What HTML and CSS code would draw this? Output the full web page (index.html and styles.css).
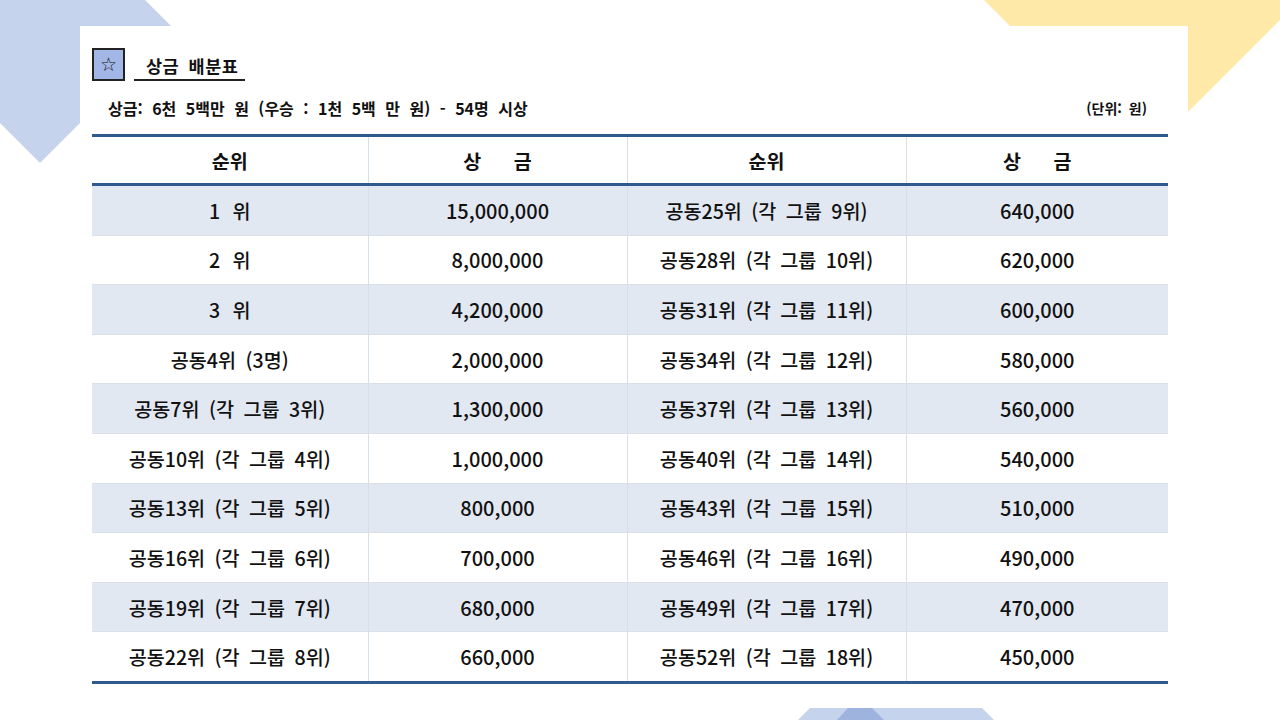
FILE: index.html
```html
<!DOCTYPE html>
<html lang="ko">
<head>
<meta charset="utf-8">
<link rel="stylesheet" href="styles.css">
</head>
<body>
<svg class="deco" width="1280" height="720" viewBox="0 0 1280 720" aria-hidden="true">
  <polygon points="40,-105 174,29 40,163 -94,29" fill="#c6d3ec"/>
  <polygon points="1142,-158 1300,0 1142,158 984,0" fill="#fee9a9"/>
  <polygon points="798,720 810,708 982,708 994,720" fill="#c6d3ec"/>
  <polygon points="837,720 848,708 872,708 884,720" fill="#9fb3df"/>
</svg>
<main class="card">
  <header class="title-row">
    <span class="star-box">☆</span>
    <h1 class="title">상금 배분표</h1>
  </header>
  <div class="sub-row">
    <span>상금: 6천 5백만 원 (우승 : 1천 5백 만 원) - 54명 시상</span>
    <span class="unit">(단위: 원)</span>
  </div>
  <table class="prize">
    <colgroup>
      <col class="c1"><col class="c2"><col class="c3"><col class="c4">
    </colgroup>
    <thead>
      <tr><th>순위</th><th class="spread">상 금</th><th>순위</th><th class="spread">상 금</th></tr>
    </thead>
    <tbody>
      <tr><td class="rank">1 위</td><td class="num">15,000,000</td><td>공동25위 (각 그룹 9위)</td><td class="num">640,000</td></tr>
      <tr><td class="rank">2 위</td><td class="num">8,000,000</td><td>공동28위 (각 그룹 10위)</td><td class="num">620,000</td></tr>
      <tr><td class="rank">3 위</td><td class="num">4,200,000</td><td>공동31위 (각 그룹 11위)</td><td class="num">600,000</td></tr>
      <tr><td>공동4위 (3명)</td><td class="num">2,000,000</td><td>공동34위 (각 그룹 12위)</td><td class="num">580,000</td></tr>
      <tr><td>공동7위 (각 그룹 3위)</td><td class="num">1,300,000</td><td>공동37위 (각 그룹 13위)</td><td class="num">560,000</td></tr>
      <tr><td>공동10위 (각 그룹 4위)</td><td class="num">1,000,000</td><td>공동40위 (각 그룹 14위)</td><td class="num">540,000</td></tr>
      <tr><td>공동13위 (각 그룹 5위)</td><td class="num">800,000</td><td>공동43위 (각 그룹 15위)</td><td class="num">510,000</td></tr>
      <tr><td>공동16위 (각 그룹 6위)</td><td class="num">700,000</td><td>공동46위 (각 그룹 16위)</td><td class="num">490,000</td></tr>
      <tr><td>공동19위 (각 그룹 7위)</td><td class="num">680,000</td><td>공동49위 (각 그룹 17위)</td><td class="num">470,000</td></tr>
      <tr><td>공동22위 (각 그룹 8위)</td><td class="num">660,000</td><td>공동52위 (각 그룹 18위)</td><td class="num">450,000</td></tr>
    </tbody>
  </table>
</main>
</body>
</html>
```

FILE: styles.css
```css
html, body {
  margin: 0;
  padding: 0;
  background: #ffffff;
  width: 1280px;
  height: 720px;
  overflow: hidden;
}
body {
  position: relative;
  font-family: "Noto Sans CJK KR", "Noto Sans", sans-serif;
  color: #111;
}
.deco {
  position: absolute;
  left: 0;
  top: 0;
  z-index: 0;
}
.card {
  position: relative;
  z-index: 1;
  margin: 26px 0 0 80px;
  width: 1108px;
  height: 674px;
  background: #fff;
  box-sizing: border-box;
  padding: 22px 20px 0 12px;
}
.title-row {
  display: flex;
  align-items: flex-start;
  height: 33px;
}
.star-box {
  width: 33px;
  height: 33px;
  box-sizing: border-box;
  border: 2px solid #222;
  background: #a3b7e6;
  display: flex;
  align-items: center;
  justify-content: center;
  font-size: 19px;
  line-height: 1;
  color: #111;
  font-family: "DejaVu Sans", sans-serif;
  font-weight: 700;
}
.title {
  margin: 0 0 0 9px;
  padding: 0 7px 0 12px;
  height: 31px;
  border-bottom: 2px solid #222;
  font-size: 17.5px;
  font-weight: 700;
  line-height: 36px;
  letter-spacing: 0.5px;
  word-spacing: 4px;
}
.sub-row {
  display: flex;
  justify-content: space-between;
  align-items: center;
  height: 53px;
  padding: 0 21px 0 16px;
  font-size: 16px;
  font-weight: 700;
  word-spacing: 5px;
}
.sub-row .unit {
  font-size: 14px;
  word-spacing: 3px;
}
.prize {
  width: 1076px;
  border-collapse: collapse;
  table-layout: fixed;
  border-top: 3px solid #2f5a8d;
  border-bottom: 3px solid #2f5a8d;
}
.c1 { width: 276px; }
.c2 { width: 259px; }
.c3 { width: 279px; }
.c4 { width: 262px; }
.prize th, .prize td {
  text-align: center;
  padding: 0;
  border-left: 1px solid #d7dfeb;
  border-right: 1px solid #d7dfeb;
  white-space: nowrap;
  word-spacing: 4px;
}
.prize th:first-child, .prize td:first-child { border-left: none; }
.prize th:last-child, .prize td:last-child { border-right: none; }
.prize th {
  height: 46px;
  font-size: 19.5px;
  font-weight: 700;
  border-bottom: 3px solid #2f5a8d;
}
.prize th.spread {
  word-spacing: 27px;
}
.prize td {
  height: 48.6px;
  font-size: 19.6px;
  font-weight: 500;
  border-bottom: 1px solid #d9e0ea;
}
.prize td.num {
  font-size: 20px;
}
.prize td.rank {
  word-spacing: 7px;
}
.prize tbody tr:last-child td { border-bottom: none; }
.prize tbody tr:nth-child(odd) td { background: #e2e8f1; }
```
